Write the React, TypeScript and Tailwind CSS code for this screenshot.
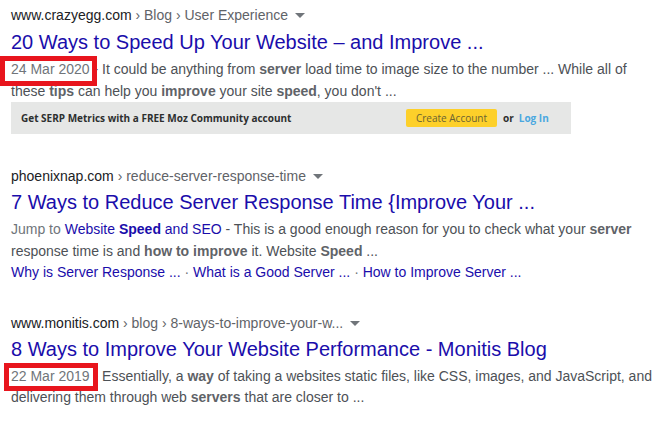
import type { ReactNode } from "react"

const arial = { fontFamily: '"Liberation Sans", Arial, sans-serif' }

function Caret() {
  return (
    <svg width="10" height="6" viewBox="0 0 10 6" className="ml-[7px] inline-block align-middle">
      <path d="M0 0 L10 0 L5 5 Z" fill="#70757a" />
    </svg>
  )
}

function UrlLine({ domain, crumbs }: { domain: string; crumbs: string }) {
  return (
    <div className="h-[20px] text-[14px] leading-[20px] whitespace-nowrap">
      <span className="text-[#202124]">{domain}</span>
      <span className="text-[#5f6368]">{crumbs}</span>
      <Caret />
    </div>
  )
}

function Title({ children, first }: { children: ReactNode; first?: boolean }) {
  return (
    <div
      className={
        first
          ? "mt-[4px] text-[20px] leading-[26px] text-[#1a0dab] whitespace-nowrap"
          : "mt-[3px] text-[20px] leading-[26px] text-[#1a0dab] whitespace-nowrap"
      }
    >
      {children}
    </div>
  )
}

function Line({ children }: { children: ReactNode }) {
  return (
    <div className="text-[14px] leading-[21.5px] text-[#4d5156] whitespace-nowrap">
      {children}
    </div>
  )
}

export default function App() {
  return (
    <div className="w-[672px] h-[424px] bg-white overflow-hidden pl-[11px] pt-[5px]" style={arial}>
      {/* result 1 */}
      <UrlLine domain="www.crazyegg.com" crumbs=" › Blog › User Experience" />
      <Title first>20 Ways to Speed Up Your Website – and Improve ...</Title>
      <div className="mt-[4px]">
        <div className="relative">
          <span className="absolute left-[-11px] top-[-3px] h-[30px] w-[97px] border-[5px] border-[#e8151d]" />
          <Line>
            <span className="text-[#70757a]">24 Mar 2020</span> - It could be anything from{" "}
            <b className="text-[#5f6368]">server</b> load time to image size to the number ... While all of
          </Line>
        </div>
        <Line>
          these <b className="text-[#5f6368]">tips</b> can help you <b className="text-[#5f6368]">improve</b> your
          site <b className="text-[#5f6368]">speed</b>, you don't ...
        </Line>
      </div>
      <div
        className="flex items-center h-[32px] w-[560px] bg-[#e6e7e6] pl-[10px]"
        style={{ fontFamily: '"Open Sans", sans-serif' }}
      >
        <span className="text-[10px] font-bold text-[#2d2f2f] w-[385px]">
          Get SERP Metrics with a FREE Moz Community account
        </span>
        <span className="flex items-center justify-center h-[18px] w-[91px] rounded-[2px] bg-[#fdd02a] text-[10px] text-[#6a6233]">
          Create Account
        </span>
        <span className="ml-[6px] text-[10px] font-bold text-[#2d2f2f]">or</span>
        <span className="ml-[5px] text-[10px] font-bold text-[#4aa7e0]">Log In</span>
      </div>

      {/* result 2 */}
      <div className="mt-[32px]">
        <UrlLine domain="phoenixnap.com" crumbs=" › reduce-server-response-time" />
        <Title>7 Ways to Reduce Server Response Time {"{"}Improve Your ...</Title>
        <div className="mt-[4px]">
          <Line>
            <span className="text-[#70757a]">Jump to </span>
            <span className="text-[#1a0dab]">
              Website <b>Speed</b> and SEO
            </span>{" "}
            - This is a good enough reason for you to check what your <b className="text-[#5f6368]">server</b>
          </Line>
          <Line>
            response time is and <b className="text-[#5f6368]">how to improve</b> it. Website{" "}
            <b className="text-[#5f6368]">Speed</b> ...
          </Line>
          <Line>
            <span className="text-[#1a0dab]">Why is Server Response ...</span>
            <span className="text-[#70757a]"> · </span>
            <span className="text-[#1a0dab]">What is a Good Server ...</span>
            <span className="text-[#70757a]"> · </span>
            <span className="text-[#1a0dab]">How to Improve Server ...</span>
          </Line>
        </div>
      </div>

      {/* result 3 */}
      <div className="mt-[29px]">
        <UrlLine domain="www.monitis.com" crumbs=" › blog › 8-ways-to-improve-your-w..." />
        <Title>8 Ways to Improve Your Website Performance - Monitis Blog</Title>
        <div className="mt-[4px]">
          <div className="relative">
            <span className="absolute left-[-7px] top-[-3px] h-[28px] w-[94px] border-[5px] border-[#e8151d]" />
            <Line>
              <span className="text-[#70757a]">22 Mar 2019</span> - Essentially, a <b className="text-[#5f6368]">way</b>{" "}
              of taking a websites static files, like CSS, images, and JavaScript, and
            </Line>
          </div>
          <Line>
            delivering them through web <b className="text-[#5f6368]">servers</b> that are closer to ...
          </Line>
        </div>
      </div>
    </div>
  )
}
